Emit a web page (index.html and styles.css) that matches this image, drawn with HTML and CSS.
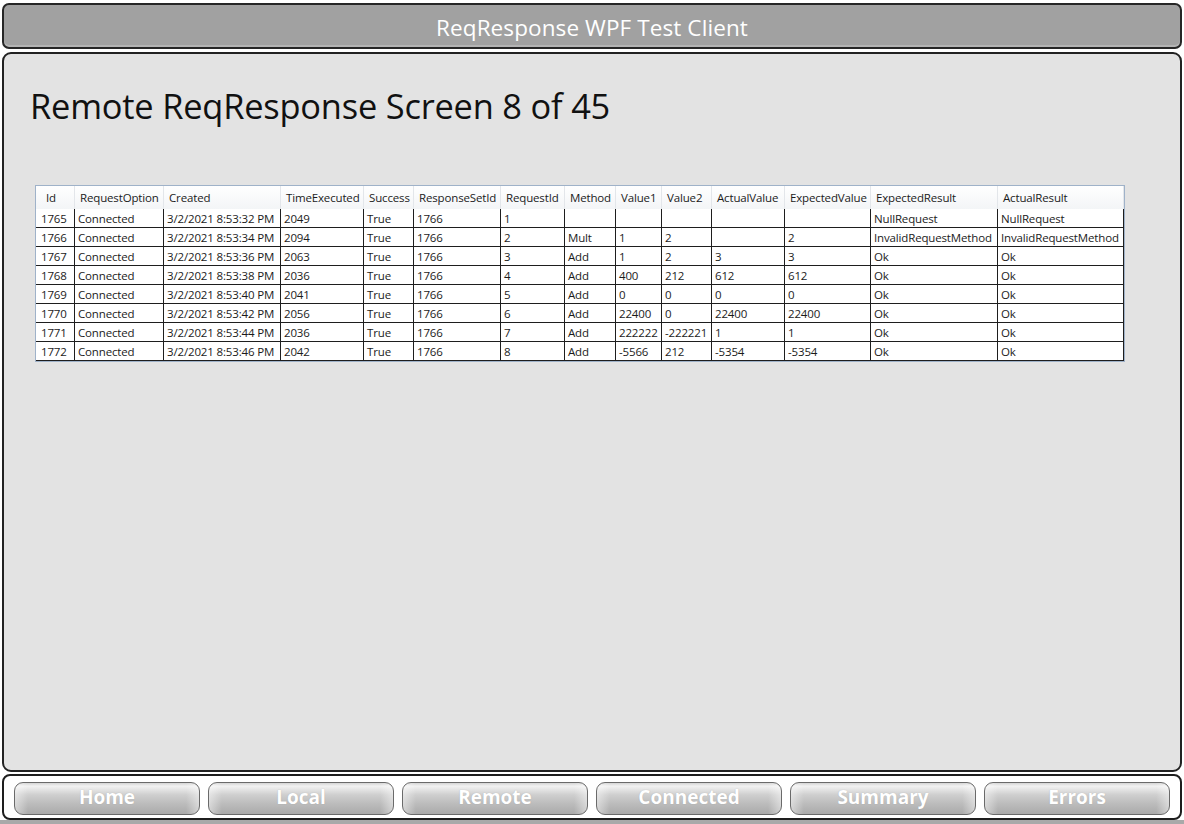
FILE: index.html
```html
<!DOCTYPE html>
<html>
<head>
<meta charset="utf-8">
<title>ReqResponse WPF Test Client</title>
<link rel="stylesheet" href="styles.css">
</head>
<body>
<div class="window">
  <header class="titlebar">ReqResponse WPF Test Client</header>
  <main class="panel">
    <h1 class="heading">Remote ReqResponse Screen 8 of 45</h1>
    <div class="grid-wrap">
      <table class="grid">
        <colgroup>
          <col class="c-id"><col class="c-opt"><col class="c-created"><col class="c-time"><col class="c-succ"><col class="c-rsid"><col class="c-rid"><col class="c-meth"><col class="c-v1"><col class="c-v2"><col class="c-av"><col class="c-ev"><col class="c-er"><col class="c-ar">
        </colgroup>
        <thead>
          <tr>
            <th class="first">Id</th><th>RequestOption</th><th>Created</th><th>TimeExecuted</th><th>Success</th><th>ResponseSetId</th><th>RequestId</th><th>Method</th><th>Value1</th><th>Value2</th><th>ActualValue</th><th>ExpectedValue</th><th>ExpectedResult</th><th>ActualResult</th>
          </tr>
        </thead>
        <tbody>
          <tr><td class="first">1765</td><td>Connected</td><td>3/2/2021 8:53:32 PM</td><td>2049</td><td>True</td><td>1766</td><td>1</td><td></td><td></td><td></td><td></td><td></td><td>NullRequest</td><td>NullRequest</td></tr>
          <tr><td class="first">1766</td><td>Connected</td><td>3/2/2021 8:53:34 PM</td><td>2094</td><td>True</td><td>1766</td><td>2</td><td>Mult</td><td>1</td><td>2</td><td></td><td>2</td><td>InvalidRequestMethod</td><td>InvalidRequestMethod</td></tr>
          <tr><td class="first">1767</td><td>Connected</td><td>3/2/2021 8:53:36 PM</td><td>2063</td><td>True</td><td>1766</td><td>3</td><td>Add</td><td>1</td><td>2</td><td>3</td><td>3</td><td>Ok</td><td>Ok</td></tr>
          <tr><td class="first">1768</td><td>Connected</td><td>3/2/2021 8:53:38 PM</td><td>2036</td><td>True</td><td>1766</td><td>4</td><td>Add</td><td>400</td><td>212</td><td>612</td><td>612</td><td>Ok</td><td>Ok</td></tr>
          <tr><td class="first">1769</td><td>Connected</td><td>3/2/2021 8:53:40 PM</td><td>2041</td><td>True</td><td>1766</td><td>5</td><td>Add</td><td>0</td><td>0</td><td>0</td><td>0</td><td>Ok</td><td>Ok</td></tr>
          <tr><td class="first">1770</td><td>Connected</td><td>3/2/2021 8:53:42 PM</td><td>2056</td><td>True</td><td>1766</td><td>6</td><td>Add</td><td>22400</td><td>0</td><td>22400</td><td>22400</td><td>Ok</td><td>Ok</td></tr>
          <tr><td class="first">1771</td><td>Connected</td><td>3/2/2021 8:53:44 PM</td><td>2036</td><td>True</td><td>1766</td><td>7</td><td>Add</td><td>222222</td><td>-222221</td><td>1</td><td>1</td><td>Ok</td><td>Ok</td></tr>
          <tr><td class="first">1772</td><td>Connected</td><td>3/2/2021 8:53:46 PM</td><td>2042</td><td>True</td><td>1766</td><td>8</td><td>Add</td><td>-5566</td><td>212</td><td>-5354</td><td>-5354</td><td>Ok</td><td>Ok</td></tr>
        </tbody>
      </table>
    </div>
  </main>
  <nav class="navbar">
    <button class="nav-btn">Home</button>
    <button class="nav-btn">Local</button>
    <button class="nav-btn">Remote</button>
    <button class="nav-btn">Connected</button>
    <button class="nav-btn">Summary</button>
    <button class="nav-btn">Errors</button>
  </nav>
  <div class="edge"></div>
</div>
</body>
</html>
```

FILE: styles.css
```css
* { box-sizing: border-box; }
html, body {
  margin: 0;
  padding: 0;
  background: #ffffff;
  font-family: "Open Sans", "Noto Sans", "DejaVu Sans", sans-serif;
}
.window {
  width: 1184px;
  height: 824px;
  display: flex;
  flex-direction: column;
  overflow: hidden;
}
.titlebar {
  margin: 3px 2px 0 2px;
  height: 46px;
  flex: none;
  background: #a1a1a1;
  border: 2px solid #262626;
  border-radius: 7px;
  box-shadow: inset 0 -2px 0 #b4b4b4;
  color: #ffffff;
  font-size: 22.5px;
  display: flex;
  align-items: center;
  justify-content: center;
  padding-top: 2px;
  letter-spacing: 0.1px;
}
.panel {
  margin: 3px 2px 0 2px;
  flex: 1;
  background: #e3e3e3;
  border: 2px solid #222222;
  border-radius: 9px;
  padding: 0 0 0 26px;
  min-height: 0;
}
.heading {
  margin: 27px 0 0 0;
  font-size: 34.4px;
  line-height: 50px;
  font-weight: 400;
  color: #111111;
  letter-spacing: -0.2px;
}
.grid-wrap {
  margin: 54px 0 0 5px;
  width: 1090px;
  border: 1px solid #9fb2c9;
  background: #ffffff;
}
.grid {
  border-collapse: separate;
  border-spacing: 0;
  table-layout: fixed;
  width: 1088px;
  font-size: 11.5px;
  letter-spacing: -0.15px;
  color: #1b1b1b;
}
.c-id { width: 39px; }
.c-opt { width: 89px; }
.c-created { width: 117px; }
.c-time { width: 83px; }
.c-succ { width: 50px; }
.c-rsid { width: 87px; }
.c-rid { width: 64px; }
.c-meth { width: 51px; }
.c-v1 { width: 46px; }
.c-v2 { width: 50px; }
.c-av { width: 73px; }
.c-ev { width: 86px; }
.c-er { width: 127px; }
.c-ar { width: 126px; }
.grid th {
  height: 23px;
  padding: 0 0 1px 5px;
  text-align: left;
  font-weight: 400;
  background: linear-gradient(#ffffff, #f3f5f7);
  border-right: 1px solid #e3e6ea;
  white-space: nowrap;
  overflow: hidden;
}
.grid th.first { padding-left: 10px; }
.grid td {
  height: 19px;
  padding: 0 0 0 3px;
  border-right: 1px solid #1e1e1e;
  border-bottom: 1px solid #1e1e1e;
  white-space: nowrap;
  overflow: hidden;
  line-height: 17px;
}
.grid td.first { padding-left: 5px; }
.navbar {
  margin: 2px 2px 0 2px;
  height: 46px;
  flex: none;
  background: #ffffff;
  border: 2px solid #1e1e1e;
  border-radius: 8px;
  display: flex;
  gap: 8px;
  padding: 6px 10px 0 10px;
}
.nav-btn {
  width: 186px;
  height: 33px;
  flex: none;
  border: 1px solid #6a6a6a;
  border-radius: 9px;
  background:
    linear-gradient(to right, rgba(255,255,255,0.45), rgba(255,255,255,0) 7%, rgba(255,255,255,0) 93%, rgba(255,255,255,0.45)),
    linear-gradient(to bottom, #d4d4d4 0%, #f2f2f2 10%, #cfcfcf 38%, #bdbdbd 65%, #aaaaaa 100%);
  color: #ffffff;
  font-family: "Open Sans", "Noto Sans", sans-serif;
  font-weight: 700;
  font-size: 19px;
  padding: 0 0 3px 0;
  text-shadow: 0 0 1px rgba(110,110,110,0.4);
}
.edge {
  flex: none;
  height: 4px;
  background: #a9a9a9;
}
```
